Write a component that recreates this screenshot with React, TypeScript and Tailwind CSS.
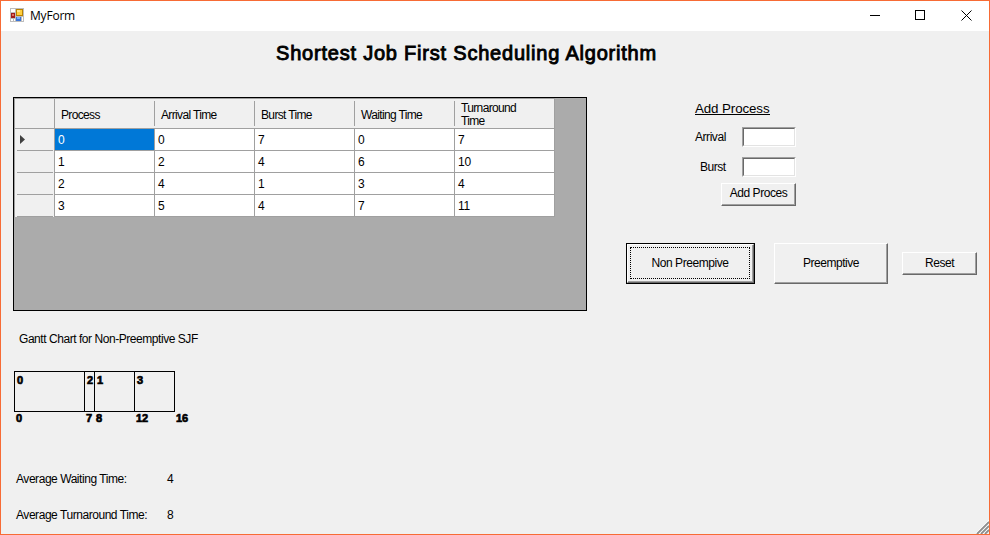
const columns = ['Process', 'Arrival Time', 'Burst Time', 'Waiting Time', 'Turnaround Time'];
const rows = [
  [0, 0, 7, 0, 7],
  [1, 2, 4, 6, 10],
  [2, 4, 1, 3, 4],
  [3, 5, 4, 7, 11],
];

function TitleBar() {
  return (
    <header className="flex h-[30px] shrink-0 items-center bg-white pb-px pl-[9px]">
      <svg width="14" height="14" viewBox="0 0 14 14" shapeRendering="crispEdges" className="mb-px">
        <rect width="14" height="14" fill="#bdbdbd" />
        <rect x="1" y="1" width="4" height="3" fill="#fff" />
        <rect x="1" y="11" width="2" height="2" fill="#fff" />
        <rect x="4" y="11" width="1" height="2" fill="#fff" />
        <rect x="12" y="9" width="1" height="4" fill="#fff" />
        <rect x="1" y="5" width="4" height="5" fill="#a01c1c" />
        <rect x="2" y="6" width="2" height="2" fill="#e07060" />
        <rect x="6" y="1" width="7" height="7" fill="#b98200" />
        <rect x="7" y="2" width="5" height="5" fill="#ffcf3f" />
        <rect x="7" y="2" width="3" height="2" fill="#ffe68c" />
        <rect x="6" y="9" width="5" height="4" fill="#3a74d8" />
        <rect x="7" y="9" width="3" height="2" fill="#7db0fa" />
      </svg>
      <span className="ml-[6px] font-['Open_Sans',sans-serif] text-[12px] leading-[16px] tracking-[-0.2px]">MyForm</span>
      <div className="mr-[17px] ml-auto flex items-center gap-[35px]">
        <svg width="11" height="11" shapeRendering="crispEdges"><path d="M1 5.5H11" stroke="#000" /></svg>
        <svg width="11" height="11" shapeRendering="crispEdges"><rect x=".5" y=".5" width="9" height="9" fill="none" stroke="#000" /></svg>
        <svg width="11" height="11"><path d="M.5 .5L10.5 10.5M10.5 .5L.5 10.5" stroke="#000" /></svg>
      </div>
    </header>
  );
}

function DataGrid() {
  return (
    <div className="h-[214px] w-[574px] border border-black bg-[#ababab]">
      <div className="w-[541px] border-t border-l border-[#a0a0a0]">
        <div className="flex h-[30px] border-b border-[#a0a0a0] bg-[#f0f0f0]">
          <div className="w-[40px] border-r border-[#a0a0a0]" />
          {columns.map((name, i) => (
            <div
              key={name}
              className={`flex w-[100px] items-center border-r border-[#a0a0a0] pr-5 pl-1.5 leading-[13px] tracking-[-0.65px] ${i < 4 ? 'mt-[2px] mb-[2px] pt-[3px]' : 'pt-[3px]'}`}
            >
              {name}
            </div>
          ))}
        </div>
        {rows.map((row, r) => (
          <div key={r} className="flex h-[22px]">
            <div className="flex w-[40px] border-r border-[#a0a0a0] bg-[#f0f0f0] pr-px pl-[2px]">
              <div className="flex w-full items-center border-b border-[#a0a0a0] pl-[3px]">
                {r === 0 && (
                  <svg width="5" height="9"><path d="M0 0L5 4.5L0 9Z" fill="#404040" /></svg>
                )}
              </div>
            </div>
            {row.map((value, c) => (
              <div
                key={c}
                className={`flex w-[100px] items-center border-r border-b border-[#a0a0a0] pt-px pl-[3px] text-[12px] leading-[14px] tracking-[-0.2px] ${r === 0 && c === 0 ? 'bg-[#0078d7] text-white' : 'bg-white'}`}
              >
                {value}
              </div>
            ))}
          </div>
        ))}
      </div>
    </div>
  );
}

function Field({ label, inset }: { label: string; inset: string }) {
  return (
    <label className="flex h-[20px] items-center">
      <span className={`w-[47px] leading-[14px] ${inset}`}>{label}</span>
      <span className="h-[20px] w-[54px] border border-t-[#a0a0a0] border-r-white border-b-white border-l-[#a0a0a0]">
        <input className="block h-full w-full border border-t-[#696969] border-r-[#e3e3e3] border-b-[#e3e3e3] border-l-[#696969] bg-white outline-none" />
      </span>
    </label>
  );
}

function Button({ label, size, text = '' }: { label: string; size: string; text?: string }) {
  return (
    <button className={`block border border-t-white border-r-[#696969] border-b-[#696969] border-l-white ${size}`}>
      <span className={`flex h-full w-full items-center justify-center border-r border-b border-[#a0a0a0] leading-[14px] ${text}`}>{label}</span>
    </button>
  );
}

function SidePanel() {
  return (
    <aside className="ml-[39px] w-[352px] pt-[3px]">
      <div className="ml-[69px]">
        <h2 className="h-[15px] w-[75px] border-b border-black text-[13.33px] leading-[17px] tracking-[-0.1px] whitespace-nowrap">Add Process</h2>
        <div className="mt-[12px]"><Field label="Arrival" inset="" /></div>
        <div className="mt-[10px]"><Field label="Burst" inset="pl-[5px]" /></div>
        <div className="mt-[6px] ml-[26px]"><Button label="Add Proces" size="h-[23px] w-[75px]" text="pb-[2px] pl-px" /></div>
      </div>
      <div className="mt-[37px] flex items-center">
        <button className="h-[41px] w-[129px] border border-black">
          <span className="block h-full w-full border border-t-white border-r-[#696969] border-b-[#696969] border-l-white">
            <span className="block h-full w-full border-r border-b border-[#a0a0a0] p-[2px]">
              <span className="flex h-full w-full items-center justify-center border border-dotted border-black pb-px leading-[14px]">Non Preempive</span>
            </span>
          </span>
        </button>
        <div className="ml-[19px]"><Button label="Preemptive" size="h-[41px] w-[114px]" text="pl-px" /></div>
        <div className="ml-[14px]"><Button label="Reset" size="h-[23px] w-[75px]" text="pl-px" /></div>
      </div>
    </aside>
  );
}

function GanttChart() {
  return (
    <svg width="190" height="56" className="mt-[25px] ml-[13px] block font-bold tracking-normal" fontSize="11">
      <g stroke="#000" fill="none" shapeRendering="crispEdges">
        <rect x=".5" y=".5" width="160" height="40" />
        <path d="M70.5 0V41M80.5 0V41M120.5 0V41" />
      </g>
      <g stroke="#000" strokeWidth=".7">
        <text x="3" y="13">0</text>
        <text x="73" y="13">2</text>
        <text x="83" y="13">1</text>
        <text x="123" y="13">3</text>
        <text x="2" y="51">0</text>
        <text x="72" y="51">7</text>
        <text x="82" y="51">8</text>
        <text x="122" y="51">12</text>
        <text x="162" y="51">16</text>
      </g>
    </svg>
  );
}

export default function App() {
  return (
    <div className="flex h-[535px] w-[990px] flex-col overflow-hidden border border-[#f76b35] bg-[#f0f0f0] font-['Liberation_Sans',Arial,sans-serif] text-[12px] tracking-[-0.45px] text-black">
      <TitleBar />
      <h1 className="mt-[10px] ml-[275px] h-[24px] text-[20px] leading-[24px] tracking-[0.79px] whitespace-nowrap [-webkit-text-stroke:0.9px_black]">
        Shortest Job First Scheduling Algorithm
      </h1>
      <div className="mt-[32px] ml-[12px] flex">
        <DataGrid />
        <SidePanel />
      </div>
      <p className="mt-[21px] ml-[18px] leading-[14px]">Gantt Chart for Non-Preemptive SJF</p>
      <GanttChart />
      <div className="mt-auto flex items-end">
        <dl className="mb-[12px] ml-[15px] grid grid-cols-[151px_auto] gap-y-[22px] leading-[14px]">
          <dt>Average Waiting Time:</dt>
          <dd>4</dd>
          <dt>Average Turnaround Time:</dt>
          <dd>8</dd>
        </dl>
        <svg width="13" height="14" className="ml-auto">
          <path d="M-1 14L13 0M3 14L13 4M7 14L13 8" stroke="#fff" strokeWidth="1" />
          <path d="M1 14L13 2M5 14L13 6M9 14L13 10" stroke="#8f8f8f" strokeWidth="1.8" />
        </svg>
      </div>
    </div>
  );
}
